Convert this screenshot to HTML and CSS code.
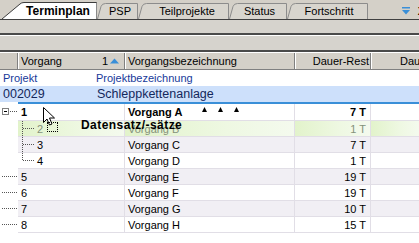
FILE: index.html
```html
<!DOCTYPE html>
<html>
<head>
<meta charset="utf-8">
<link rel="stylesheet" href="styles.css">
</head>
<body>
<div class="app">
  <div class="tabs">
    <div class="tab active w-term">
      <svg class="tab-shape" width="95" height="19" viewBox="0 0 95 19"><path d="M0 19 L18 4 Q19.5 2.5 22 2.5 L94.5 2.5 L94.5 19" fill="#ffffff" stroke="#3c3c3c" stroke-width="1"/><path d="M94.5 3 L94.5 19" stroke="#8a8a8a"/></svg>
      <span class="tab-label bold">Terminplan</span>
    </div>
    <div class="tab w-psp">
      <svg class="tab-shape" width="41" height="19" viewBox="0 0 41 19"><path d="M0.5 19 L4 6.5 Q5 3.5 8.5 3.5 L40.5 3.5 L40.5 19" fill="#d8d5ce" stroke="#8c8c8c"/></svg>
      <span class="tab-label">PSP</span>
    </div>
    <div class="tab w-teil">
      <svg class="tab-shape" width="91" height="19" viewBox="0 0 91 19"><path d="M0.5 19 L4 6.5 Q5 3.5 8.5 3.5 L90.5 3.5 L90.5 19" fill="#d8d5ce" stroke="#8c8c8c"/></svg>
      <span class="tab-label">Teilprojekte</span>
    </div>
    <div class="tab w-stat">
      <svg class="tab-shape" width="58" height="19" viewBox="0 0 58 19"><path d="M0.5 19 L4 6.5 Q5 3.5 8.5 3.5 L57.5 3.5 L57.5 19" fill="#d8d5ce" stroke="#8c8c8c"/></svg>
      <span class="tab-label">Status</span>
    </div>
    <div class="tab w-fort">
      <svg class="tab-shape" width="81" height="19" viewBox="0 0 81 19"><path d="M0.5 19 L4 6.5 Q5 3.5 8.5 3.5 L80.5 3.5 L80.5 19" fill="#d8d5ce" stroke="#8c8c8c"/></svg>
      <span class="tab-label">Fortschritt</span>
    </div>
    <div class="tab-tools">
      <svg class="menu-icon" width="8" height="8" viewBox="0 0 8 8"><rect x="0" y="0" width="8" height="1.5" fill="#3a8fd8"/><path d="M0 3 L8 3 L4 7.5 Z" fill="#3a8fd8"/></svg>
      <span class="close">X</span>
    </div>
  </div>
  <div class="bar bar1"></div>
  <div class="bar bar2"></div>
  <div class="grid">
    <div class="hdr">
      <div class="hc c-g"></div>
      <div class="hc c-v"><span>Vorgang</span><span class="sort">1 <svg width="9" height="6" viewBox="0 0 9 6"><path d="M0 5.5 L4.5 0.5 L9 5.5 Z" fill="#3a8fd8"/></svg></span></div>
      <div class="hc c-b">Vorgangsbezeichnung</div>
      <div class="hc c-d right">Dauer-Rest</div>
      <div class="hc c-x"><span class="cut">Dauer</span></div>
    </div>
    <div class="proj-label"><span class="pl-1">Projekt</span><span>Projektbezeichnung</span></div>
    <div class="proj"><span class="pr-1">002029</span><span>Schleppkettenanlage</span></div>
    <div class="proj-line"></div>
    <div class="rows">
      <div class="row r-white first">
        <div class="c-g"><svg width="18" height="15" viewBox="0 0 18 15"><rect x="2.5" y="4.5" width="6" height="6" fill="#fff" stroke="#808080"/><path d="M4 7.5 H7" stroke="#000"/><path d="M10 7.5 H18" stroke="#555" stroke-dasharray="1 1"/></svg></div>
        <div class="c c-v bold">1</div>
        <div class="c c-b bold">Vorgang A<span class="marks"><svg width="5" height="5" viewBox="0 0 5 5"><path d="M0 5 L2.5 0 L5 5 Z" fill="#000"/></svg><svg width="5" height="5" viewBox="0 0 5 5"><path d="M0 5 L2.5 0 L5 5 Z" fill="#000"/></svg><svg width="5" height="5" viewBox="0 0 5 5"><path d="M0 5 L2.5 0 L5 5 Z" fill="#000"/></svg></span></div>
        <div class="c c-d right bold">7 T</div>
        <div class="c c-x"></div>
      </div>
      <div class="row r-green dim">
        <div class="c-g"></div>
        <div class="c c-v child"><span class="conn"></span>2</div>
        <div class="c c-b">Vorgang B</div>
        <div class="c c-d right">1 T</div>
        <div class="c c-x"></div>
      </div>
      <div class="row r-lav">
        <div class="c-g"></div>
        <div class="c c-v child"><span class="conn"></span>3</div>
        <div class="c c-b">Vorgang C</div>
        <div class="c c-d right">7 T</div>
        <div class="c c-x"></div>
      </div>
      <div class="row r-white">
        <div class="c-g"></div>
        <div class="c c-v child"><span class="conn last"></span>4</div>
        <div class="c c-b">Vorgang D</div>
        <div class="c c-d right">1 T</div>
        <div class="c c-x"></div>
      </div>
      <div class="row r-lav">
        <div class="c-g root"></div>
        <div class="c c-v">5</div>
        <div class="c c-b">Vorgang E</div>
        <div class="c c-d right">19 T</div>
        <div class="c c-x"></div>
      </div>
      <div class="row r-white">
        <div class="c-g root"></div>
        <div class="c c-v">6</div>
        <div class="c c-b">Vorgang F</div>
        <div class="c c-d right">19 T</div>
        <div class="c c-x"></div>
      </div>
      <div class="row r-lav">
        <div class="c-g root"></div>
        <div class="c c-v">7</div>
        <div class="c c-b">Vorgang G</div>
        <div class="c c-d right">10 T</div>
        <div class="c c-x"></div>
      </div>
      <div class="row r-white">
        <div class="c-g root"></div>
        <div class="c c-v">8</div>
        <div class="c c-b">Vorgang H</div>
        <div class="c c-d right">15 T</div>
        <div class="c c-x"></div>
      </div>
      <div class="drag">
        <svg class="cursor" width="13" height="20" viewBox="0 0 13 20"><path d="M0.5 0.5 L0.5 15.5 L4 12 L6.5 18 L9 17 L6.5 11 L11.5 11 Z" fill="#fff" stroke="#000" stroke-width="1"/></svg>
        <span class="drop-box"></span>
        <span class="drag-text">Datensatz/-sätze</span>
      </div>
    </div>
  </div>
</div>
</body>
</html>
```
FILE: styles.css
```css
* { box-sizing: border-box; }
html, body { margin: 0; padding: 0; }
body {
  width: 419px;
  height: 243px;
  overflow: hidden;
  background: #ffffff;
  font-family: "Liberation Sans", Arial, sans-serif;
  font-size: 11px;
  color: #000;
}
.app { width: 419px; height: 243px; overflow: hidden; position: relative; }
.bold { font-weight: bold; }
.right { justify-content: flex-end; }

/* tabs */
.tabs {
  display: flex;
  height: 20px;
  padding-left: 2px;
  background: #d4d0c8;
  border-bottom: 1px solid #404040;
}
.tab {
  position: relative;
  height: 19px;
  display: flex;
  align-items: center;
  justify-content: center;
  flex: none;
}
.tab-shape { position: absolute; left: 0; top: 0; }
.tab-label { position: relative; font-size: 11px; line-height: 13px; padding-top: 3px; }
.tab.active .tab-label { font-size: 12px; }
.w-term { width: 95px; padding-left: 17px; }
.w-psp { width: 41px; padding-left: 5px; }
.w-teil { width: 91px; padding-left: 7px; }
.w-stat { width: 58px; padding-left: 3px; }
.w-fort { width: 81px; padding-left: 3px; }
.tab-tools {
  margin-left: auto;
  display: flex;
  align-items: center;
  gap: 8px;
  padding-top: 2px;
  margin-right: -6px;
}
.menu-icon { display: block; }
.close { font-size: 11px; font-weight: bold; line-height: 12px; }

/* bars */
.bar { background: #d6d3cd; }
.bar1 { height: 15px; border-bottom: 2px solid #4a4a4a; }
.bar2 { height: 17px; border-top: 1px solid #ffffff; border-bottom: 2px solid #4a4a4a; }

/* grid */
.grid { position: relative; }
.hdr { display: flex; height: 18px; border-top: 1px solid #ffffff; border-bottom: 1px solid #808080; background: #d4d0c8; }
.hc {
  display: flex;
  align-items: center;
  height: 16px;
  border-left: 1px solid #ffffff;
  border-right: 1px solid #808080;
  padding: 0 2px;
  white-space: nowrap;
  overflow: hidden;
}
.hdr .c-g { border-left: none; background: #cfcbc3; }
.hc.c-v { justify-content: space-between; padding-right: 5px; }
.sort { display: flex; align-items: center; gap: 2px; }
.sort svg { display: block; margin-top: -1px; }
.hc.c-d { padding-right: 1px; }
.hc.c-x { border-right: none; padding-left: 28px; }

.c-g { width: 18px; flex: none; }
.c-v { width: 107px; flex: none; }
.c-b { width: 170px; flex: none; }
.c-d { width: 76px; flex: none; }
.c-x { flex: 1; }

.proj-label {
  display: flex;
  height: 16px;
  align-items: center;
  color: #17399a;
  padding-left: 3px;
}
.pl-1 { width: 93px; }
.proj {
  display: flex;
  height: 16px;
  align-items: center;
  background: #cde0fb;
  color: #14285c;
  font-size: 12.5px;
  padding-left: 3px;
}
.pr-1 { width: 94px; }
.proj-line { height: 2px; margin-left: 18px; background: #3a8fd8; }

.rows { position: relative; }
.row { display: flex; height: 16px; }
.row.first { height: 17px; }
.row .c {
  display: flex;
  align-items: center;
  border-bottom: 1px solid #e1dee6;
  border-right: 1px solid #e1dee6;
  padding: 0 3px;
  white-space: nowrap;
  overflow: hidden;
}
.row .c.c-d { padding-right: 4px; }
.row .c.c-x { border-right: none; }
.row .c-g svg { display: block; }
.r-lav .c { background: #f1eff4; }
.r-white .c { background: #ffffff; }
.r-green .c { background: linear-gradient(to right, #e2f3cb, #eef8e2 60%, #f4faee); }
.dim .c { color: #84917a; }

.c-g.root {
  background-image: repeating-linear-gradient(to right, #555 0 1px, transparent 1px 2px);
  background-size: 16px 1px;
  background-position: 2px 7px;
  background-repeat: no-repeat;
}
.c-v.child { padding-left: 4px; }
.conn {
  width: 13px;
  height: 16px;
  margin-right: 2px;
  flex: none;
  align-self: flex-start;
  background-image:
    repeating-linear-gradient(to bottom, #555 0 1px, transparent 1px 2px),
    repeating-linear-gradient(to right, #555 0 1px, transparent 1px 2px);
  background-size: 1px 16px, 12px 1px;
  background-position: 0 0, 1px 7px;
  background-repeat: no-repeat;
}
.conn.last { background-size: 1px 8px, 12px 1px; }
.marks { display: inline-flex; gap: 11px; margin-left: 20px; align-items: center; margin-top: -6px; }
.marks svg { display: block; }

/* drag overlay */
.drag { position: absolute; left: 0; top: 0; width: 0; height: 0; }
.cursor { position: absolute; left: 43px; top: 3px; }
.drop-box { position: absolute; left: 47px; top: 18px; width: 11px; height: 10px; border: 1px dotted #000; }
.drag-text { position: absolute; left: 81px; top: 14px; font-size: 12px; font-weight: bold; letter-spacing: 0.45px; line-height: 14px; white-space: nowrap; }
```
